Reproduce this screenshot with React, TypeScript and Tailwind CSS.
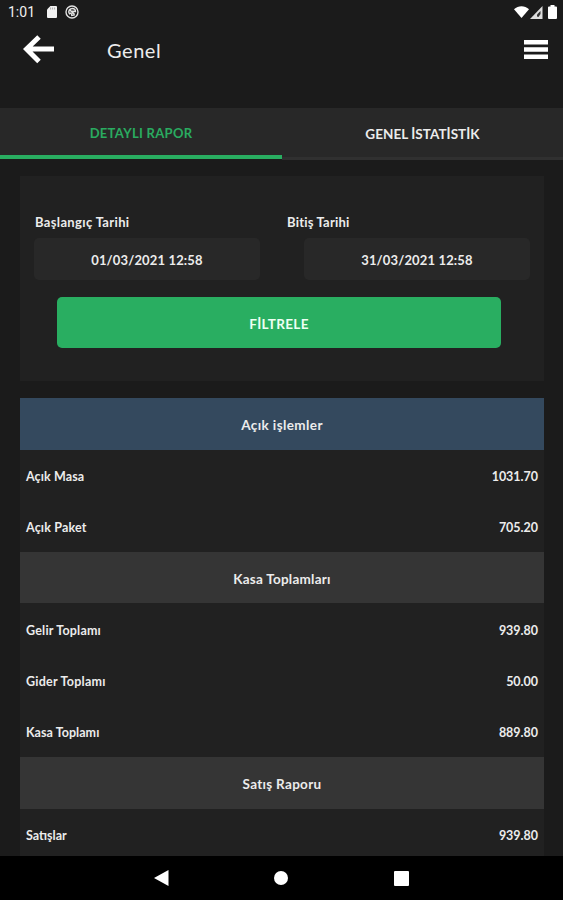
const sections = [
  {
    title: 'Açık işlemler',
    band: 'bg-[#34495e]',
    tracking: 'tracking-[0.4px]',
    rows: [
      { label: 'Açık Masa', value: '1031.70', tracking: 'tracking-[0.1px]' },
      { label: 'Açık Paket', value: '705.20', tracking: 'tracking-[0.15px]' },
    ],
  },
  {
    title: 'Kasa Toplamları',
    band: 'bg-[#353535]',
    tracking: 'tracking-[0.25px]',
    rows: [
      { label: 'Gelir Toplamı', value: '939.80', tracking: 'tracking-[0.2px]' },
      { label: 'Gider Toplamı', value: '50.00', tracking: 'tracking-[0.25px]' },
      { label: 'Kasa Toplamı', value: '889.80', tracking: 'tracking-[0.05px]' },
    ],
  },
  {
    title: 'Satış Raporu',
    band: 'bg-[#353535]',
    tracking: 'tracking-[0.3px]',
    rows: [{ label: 'Satışlar', value: '939.80', tracking: 'tracking-[0px]' }],
  },
];

function StatusBar() {
  return (
    <div className="flex h-6 shrink-0 items-center pl-[8px] pr-[6px]">
      <span className="w-[27px] font-[Roboto,sans-serif] text-[14px] font-normal leading-6 text-[#f0f0f0]">1:01</span>
      <svg className="ml-[12px]" width="10" height="12" viewBox="0 0 10 12">
        <path d="M3.4 0H9a1 1 0 0 1 1 1v10a1 1 0 0 1-1 1H1a1 1 0 0 1-1-1V3.4Z" fill="#f2f2f2" />
        <path d="M3.6 1.5v2M5.6 1.5v2M7.6 1.5v2" stroke="#999" strokeWidth=".8" />
      </svg>
      <svg className="ml-[8px]" width="14" height="14" viewBox="0 0 14 14" fill="none" stroke="#e2e2e2">
        <circle cx="7" cy="7" r="6" strokeWidth="1.4" />
        <path d="M4 8.3C3.2 5.5 5 3.4 7.3 3.4c2 0 3.2 1.2 3.1 3L7 6.2M5 5l4.6 4.6M4 9.2l2.3-1.4M6.6 8.2l.2 2.2 3-.6" strokeWidth="1.5" />
      </svg>
      <div className="ml-auto flex items-center">
        <svg width="15" height="12" viewBox="0 0 15 12">
          <path d="M0 3.2C4.3-.7 10.7-.7 15 3.2L7.5 12Z" fill="#fff" />
        </svg>
        <svg className="ml-px" width="13" height="13" viewBox="0 0 13 13">
          <path d="M0 13 12.5 0v13Z" fill="#dedede" />
          <path d="M7 10.5V8.5L10.5 5v3L8.5 11Z" fill="#333" />
        </svg>
        <svg className="ml-[5px]" width="9" height="14" viewBox="0 0 9 14">
          <path d="M2.5 0h4v1.4H8a1 1 0 0 1 1 1V13a1 1 0 0 1-1 1H1a1 1 0 0 1-1-1V2.4a1 1 0 0 1 1-1h1.5Z" fill="#fff" />
        </svg>
      </div>
    </div>
  );
}

function DateField({ value }: { value: string }) {
  return (
    <div className="flex h-[42px] w-[226px] items-center justify-center rounded-[5px] bg-[#282828] pt-[3px] text-[13px] tracking-[0.15px]">
      {value}
    </div>
  );
}

export default function App() {
  return (
    <div className="flex h-[900px] w-[563px] flex-col overflow-hidden bg-[#1b1b1b] font-[Lato,sans-serif] font-bold text-[#ececec]">
      <StatusBar />
      <header className="flex h-[84px] shrink-0 items-start pl-[23px] pr-[15px] pt-[11px]">
        <svg width="32" height="29" viewBox="0 0 32 29" fill="none" stroke="#fff">
          <path d="M16 2 3.5 14 16 26.5M3.5 14H31" strokeWidth="5" />
        </svg>
        <h1 className="ml-[52px] mt-px text-[20px] font-normal leading-7 tracking-[0.55px]">Genel</h1>
        <svg className="ml-auto mt-[5px]" width="24" height="19" viewBox="0 0 24 19" fill="#fff">
          <path d="M0 0h24v4.4H0ZM0 7.3h24v4.4H0ZM0 14.6h24V19H0Z" />
        </svg>
      </header>
      <nav className="flex h-[52px] shrink-0 items-start text-[13.5px]">
        <div className="flex h-[51px] w-[282px] items-center justify-center border-b-4 border-[#29ae61] bg-[#282828] pt-[5px] text-[#2aab60]">
          <span className="text-[13px] tracking-[0.3px]">DETAYLI RAPOR</span>
        </div>
        <div className="flex h-[52px] flex-1 items-center justify-center border-b-[3px] border-[#303030] bg-[#282828] pt-[3px]">
          <span className="tracking-[0.05px]">GENEL İSTATİSTİK</span>
        </div>
      </nav>
      <section className="mx-5 mt-4 h-[205px] w-[524px] shrink-0 bg-[#212121] pl-[14px] pt-[36px]">
        <div className="flex h-[26px] items-start pl-px text-[13px] leading-5">
          <span className="w-[252px] tracking-[0.35px]">Başlangıç Tarihi</span>
          <span className="tracking-[0.2px]">Bitiş Tarihi</span>
        </div>
        <div className="flex gap-[44px]">
          <DateField value="01/03/2021 12:58" />
          <DateField value="31/03/2021 12:58" />
        </div>
        <button className="ml-[23px] mt-[17px] flex h-[51px] w-[444px] items-center justify-center rounded-[5px] bg-[#29ae61] pt-[3px] text-[13.5px] tracking-[0.35px] text-[#eefff3]">
          FİLTRELE
        </button>
      </section>
      <main className="mx-5 mt-[17.3px] min-h-0 w-[524px] flex-1 overflow-hidden bg-[#212121] text-[12.5px]">
        {sections.map((section) => (
          <section key={section.title}>
            <h2 className={`flex h-[51.3px] items-center justify-center pt-[2px] text-[13.5px] ${section.band} ${section.tracking}`}>
              {section.title}
            </h2>
            {section.rows.map((row) => (
              <div key={row.label} className="flex h-[51.3px] items-center justify-between px-[6px] pt-[4px]">
                <span className={row.tracking}>{row.label}</span>
                <span className="tracking-[-0.02px]">{row.value}</span>
              </div>
            ))}
          </section>
        ))}
      </main>
      <footer className="flex h-11 shrink-0 items-center bg-black pl-[154px]">
        <svg width="15" height="16" viewBox="0 0 15 16"><path d="M0 8 14.5 0v16Z" fill="#fff" /></svg>
        <div className="ml-[105px] size-[14px] rounded-full bg-white" />
        <div className="ml-[106px] mt-px size-[15px] rounded-[1px] bg-white" />
      </footer>
    </div>
  );
}
